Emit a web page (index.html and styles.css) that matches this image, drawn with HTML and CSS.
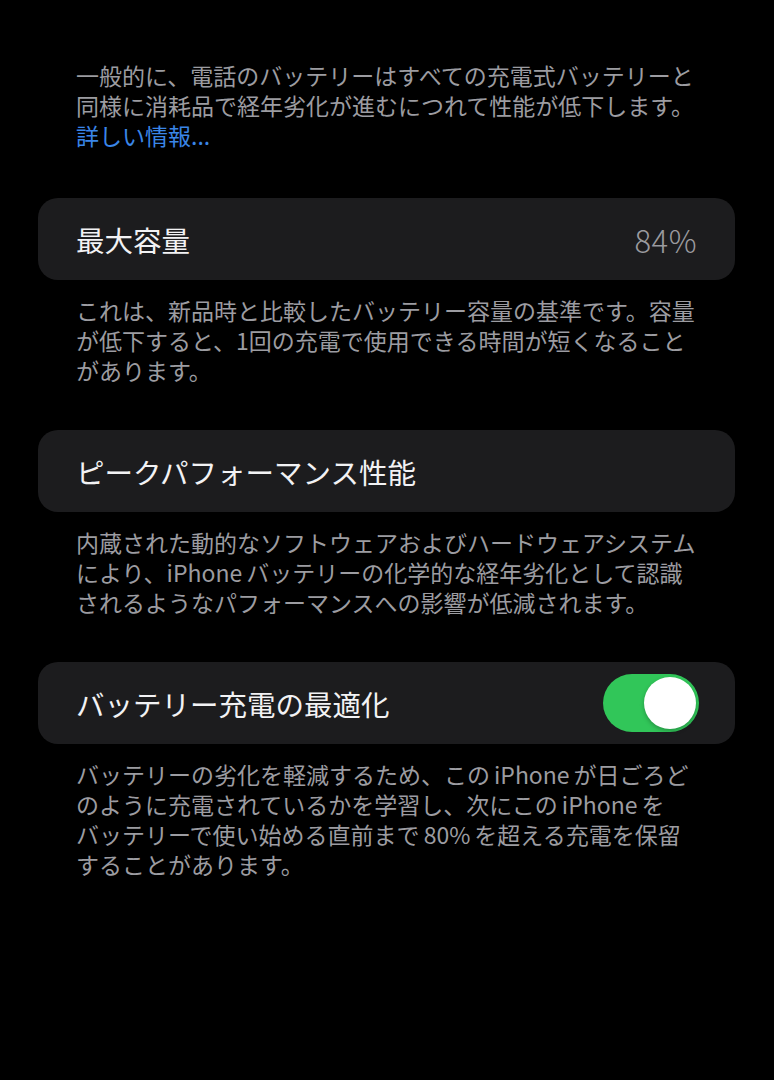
FILE: index.html
```html
<!DOCTYPE html>
<html lang="ja">
<head>
<meta charset="utf-8">
<title>バッテリーの状態と充電</title>
<link rel="stylesheet" href="styles.css">
</head>
<body>
<main class="page">
  <p class="note note-top">一般的に、電話のバッテリーはすべての充電式バッテリーと<br>同様に消耗品で経年劣化が進むにつれて性能が低下します。<br><a class="link" href="#">詳しい情報...</a></p>

  <section class="cell">
    <span class="cell-label">最大容量</span>
    <span class="cell-value">84%</span>
  </section>
  <p class="note">これは、新品時と比較したバッテリー容量の基準です。容量<br>が低下すると、1回の充電で使用できる時間が短くなること<br>があります。</p>

  <section class="cell">
    <span class="cell-label">ピークパフォーマンス性能</span>
  </section>
  <p class="note">内蔵された動的なソフトウェアおよびハードウェアシステム<br>により、iPhone<span class="gap"></span>バッテリーの化学的な経年劣化として認識<br>されるようなパフォーマンスへの影響が低減されます。</p>

  <section class="cell">
    <span class="cell-label">バッテリー充電の最適化</span>
    <span class="switch is-on" role="switch" aria-checked="true"><span class="knob"></span></span>
  </section>
  <p class="note">バッテリーの劣化を軽減するため、この<span class="gap"></span>iPhone<span class="gap"></span>が日ごろど<br>のように充電されているかを学習し、次にこの<span class="gap"></span>iPhone<span class="gap"></span>を<br>バッテリーで使い始める直前まで<span class="gap"></span>80%<span class="gap"></span>を超える充電を保留<br>することがあります。</p>
</main>
</body>
</html>
```

FILE: styles.css
```css
html, body {
  margin: 0;
  padding: 0;
  background: #000;
}

body {
  font-family: "Noto Sans CJK JP", "Noto Sans", sans-serif;
  color: #fff;
  -webkit-font-smoothing: antialiased;
}

.page {
  display: flex;
  flex-direction: column;
  padding: 60px 39px 0 38px;
  min-height: 1080px;
  box-sizing: border-box;
}

.note {
  margin: 0;
  padding: 15px 38px 45px;
  font-size: 23px;
  line-height: 30px;
  color: #9c9ca1;
  white-space: nowrap;
}

.note-top {
  padding-top: 0;
  padding-bottom: 48px;
}

/* thin spacing between Latin runs and kana */
.gap {
  display: inline-block;
  width: 4px;
}

.link {
  color: #3a86e8;
  text-decoration: none;
}

.cell {
  display: flex;
  align-items: center;
  justify-content: space-between;
  height: 82px;
  padding: 0 38px;
  background: #1c1c1e;
  border-radius: 20px;
}

.cell-label {
  font-size: 28.5px;
  color: #f2f2f4;
}

.cell-value {
  font-size: 31px;
  font-weight: 300;
  letter-spacing: 0.5px;
  color: #9a9a9f;
}

.switch {
  position: relative;
  width: 96px;
  height: 58px;
  margin-right: -2px;
  border-radius: 29px;
  background: #31c659;
}

.switch .knob {
  position: absolute;
  top: 3px;
  right: 3px;
  width: 52px;
  height: 52px;
  border-radius: 50%;
  background: #fff;
  box-shadow: 0 2px 4px rgba(0, 0, 0, 0.25);
}
```
